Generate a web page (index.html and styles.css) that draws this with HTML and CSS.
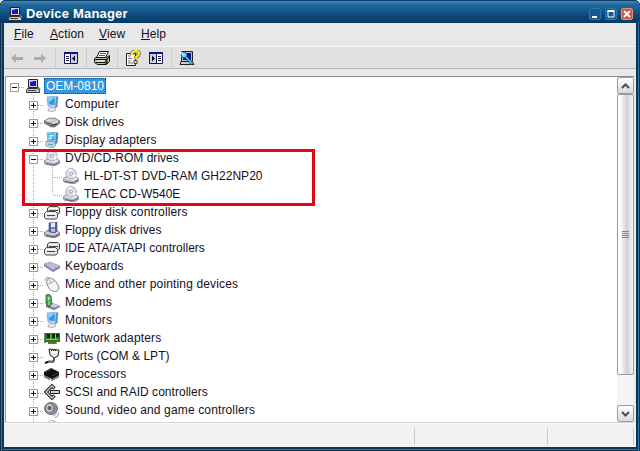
FILE: index.html
```html
<!DOCTYPE html>
<html lang="en">
<head>
    <meta charset="UTF-8">
    <title>Device Manager</title>
    <link rel="stylesheet" href="styles.css">
</head>
<body>
    <svg class="defs" width="0" height="0">
        <symbol id="pc" viewBox="0 0 16 16">
            <path d="M3.500 1.500h9v8h-9z" fill="#d8d8d8" stroke="#222"/>
            <path d="M5 3h6v5H5z" fill="#1212d8"/>
            <path d="M5 3h3v1H5z" fill="#78a8ff"/>
            <path d="M2.500 10.500h10l2 2v2h-13v-2z" fill="#ccc" stroke="#333"/>
            <path d="M3 12.500h8" stroke="#444"/>
            <path d="M13 9l2 3" stroke="#777" stroke-width="1.500"/>
        </symbol>
        <symbol id="monitor" viewBox="0 0 16 16">
            <path d="M3 1l10-1 1 1-1 10-3 1-6-2z" fill="#b9d8ee" stroke="#7899b4" stroke-width=".7"/>
            <path d="M4 2l7-.6-.6 7.6L5 8.500z" fill="#279bea"/>
            <path d="M4 2l7-.6L5 6z" fill="#8bd5ff"/>
            <path d="M12 1l2 0-1 10-2 1z" fill="#5d96c5"/>
            <path d="M7 11l4 1 1 2-3 2-5-1 0-2z" fill="#dfe3e8" stroke="#8a95a2" stroke-width=".6"/>
        </symbol>
        <symbol id="adapter" viewBox="0 0 16 16">
            <path d="M3 1l10-1 1 1-1 10-3 1-6-2z" fill="#b9d8ee" stroke="#5f8aa6" stroke-width=".7"/>
            <path d="M4 2l7-.6-.6 7.6L5 8.500z" fill="#39aee8"/>
            <path d="M5 4l5-.5M5 6.500l3-.5" stroke="#d8f4ff" stroke-width="1.500"/>
            <path d="M12 1l2 0-1 10-2 1z" fill="#4d84b0"/>
            <path d="M2 9l8 1 2 3-3 3-7-2z" fill="#cfd5dc" stroke="#76828e" stroke-width=".7"/>
            <path d="M4 12l5 1" stroke="#3d9d9d"/>
        </symbol>
        <symbol id="disk" viewBox="0 0 16 16">
            <path d="M0 7l5-3h6l5 3v2l-5 4-4 0-7-4z" fill="#777" stroke="#666" stroke-width=".5"/>
            <path d="M1 7l4-2.500h6L15 7l-5 3z" fill="#ccc"/>
            <path d="M3 7l4-1.500M9 10l5-2" stroke="#f6f6f6"/>
            <path d="M8 11.500l5-2" stroke="#333"/>
        </symbol>
        <symbol id="cd" viewBox="0 0 16 16">
            <path d="M0 11l4-3h8l4 3v2l-5 3-10-2z" fill="#b4b4c0" stroke="#777785" stroke-width=".7"/>
            <path d="M1 11l4-2h7l3 2-5 2z" fill="#e8e8f0"/>
            <path d="M2 13.500l8 1.500 5-3" fill="none" stroke="#666674"/>
            <circle cx="8" cy="5.700" r="5.200" fill="#dedfe9" stroke="#9c9caa" stroke-width=".8"/>
            <path d="M8 5.700L5 2a5 5 0 0 1 4-1zM8 5.700l3 4a5 5 0 0 0 2-3z" fill="#fafaff"/>
            <circle cx="8" cy="5.700" r="1.500" fill="#fff" stroke="#8585a0" stroke-width=".8"/>
        </symbol>
        <symbol id="controller" viewBox="0 0 16 16">
            <path d="M3.500 4l2-1.500h8l2 1.500v5l-2 1.500h-9l-1-1z" fill="#d8d8d8" stroke="#444"/>
            <path d="M5 4.500h9" stroke="#fff"/>
            <path d="M5 6.500h9" stroke="#555"/>
            <path d="M.5 9.500l2-2h9l2 2v4l-1.500 1.500h-10L.5 13.500z" fill="#e8e8e8" stroke="#444"/>
            <path d="M3 11.500h8" stroke="#444"/>
            <path d="M2 9.500h10" stroke="#fff"/>
        </symbol>
        <symbol id="floppy" viewBox="0 0 16 16">
            <path d="M0 11l4-3h8l4 3v2l-5 3-10-2z" fill="#aaaab4" stroke="#666672" stroke-width=".7"/>
            <path d="M1 11l4-2h7l3 2-5 2z" fill="#ddd"/>
            <path d="M5 1l8-1v9l-2 2-6-1z" fill="#5268a8" stroke="#36457c" stroke-width=".6"/>
            <path d="M7 1l4-.5V5L7 5.500z" fill="#e8ecfa"/>
            <path d="M7 7l4-.5V10l-4-.5z" fill="#b7c2e2"/>
            <path d="M2 13.500l8 1.500 5-3" fill="none" stroke="#555"/>
        </symbol>
        <symbol id="keyboard" viewBox="0 0 16 16">
            <path d="M0 6l6-2 10 4v2l-7 4L0 8z" fill="#7c7ca4"/>
            <path d="M0 6l6-2 10 4-7 4z" fill="#d5d5ee" stroke="#8585ad" stroke-width=".5"/>
            <path d="M2 6.500l8 4M4 5.700l8 4M6 5l8 3.800" stroke="#8080b2" stroke-dasharray="1 1"/>
        </symbol>
        <symbol id="mouse" viewBox="0 0 16 16">
            <path d="M1 5l1-3 3-1" fill="none" stroke="#888" stroke-width=".8"/>
            <path d="M3 5c0-4 6-4 9 1 3 4 4 7 1 9-3 1-6 0-8-3C3 9 2 7 3 5z" fill="#f5f5f3" stroke="#77776f" stroke-width=".9"/>
            <path d="M3 8c3 0 6-1 7-4M5 3l2 4" fill="none" stroke="#99998f" stroke-width=".8"/>
        </symbol>
        <symbol id="modem" viewBox="0 0 16 16">
            <path d="M2 11l7-2 7 3v1l-6 3-8-3z" fill="#777790"/>
            <path d="M3 11l6-2 6 3-5 2z" fill="#c8c8dc"/>
            <path d="M2 1l3-1 2 2 1 8-3 3-3-3z" fill="#459c4c" stroke="#245e32" stroke-width=".7"/>
            <path d="M3.500 3l2-.5.5 3-2 .5z" fill="#b9efb7"/>
            <path d="M4 8h2M4 10h2" stroke="#c5edc1"/>
        </symbol>
        <symbol id="network" viewBox="0 0 16 16">
            <path d="M0 3h2v10H0z" fill="#777"/>
            <path d="M1 3h15v9H1z" fill="#247a24"/>
            <path d="M3 4h3v4H3zM8 4h3v4H8zM12 4h3v3h-3z" fill="#0a270c"/>
            <path d="M2 9.500h12M7 4v5M11.500 4v6" stroke="#83d64b"/>
            <path d="M4 12h9v2H4z" fill="#a9a938"/>
            <path d="M5 12v2M7 12v2M9 12v2M11 12v2" stroke="#333"/>
        </symbol>
        <symbol id="port" viewBox="0 0 16 16">
            <path d="M5 1l10 1-1 6-4 2-4-3z" fill="#e7e5d5" stroke="#222"/>
            <path d="M7 2.500h6" stroke="#222" stroke-dasharray="1 1"/>
            <path d="M7 4l6 .5" stroke="#fff"/>
            <path d="M10 9v3c-1 4-4 0-6 2l-3 1" fill="none" stroke="#111" stroke-width="2"/>
            <path d="M10 9v3c-1 3-4 0-6 2" fill="none" stroke="#ded79b" stroke-width=".7"/>
        </symbol>
        <symbol id="cpu" viewBox="0 0 16 16">
            <path d="M0 6l7-4 8 4v3l-7 4-8-4z" fill="#111"/>
            <path d="M1 7v5M3 8v5M5 9v5M8 10v5M10 9v5M12 8v5M14 7v5" stroke="#111"/>
            <path d="M2 6l5-3M8 10l6-3" stroke="#555" stroke-width=".7"/>
        </symbol>
        <symbol id="scsi" viewBox="0 0 16 16">
            <path d="M10.500 4.500L8 2 2 8l6 6 2.500-2.500" fill="none" stroke="#222" stroke-width="3.400"/>
            <path d="M10 4L8 2 2 8l6 6 2-2" fill="none" stroke="#ccc" stroke-width="1.400"/>
            <path d="M6.500 6.500h9v3h-9z" fill="#ccc" stroke="#222"/>
        </symbol>
        <symbol id="sound" viewBox="0 0 16 16">
            <ellipse cx="7" cy="6.500" rx="6.500" ry="6" fill="#8d8d91" stroke="#707074"/>
            <ellipse cx="5.500" cy="6" rx="4" ry="4.500" fill="#c6c6cb" stroke="#666" stroke-width=".7"/>
            <circle cx="5.500" cy="6" r="2" fill="#5b5b61"/>
            <path d="M9 14c2 0 3-2 3-4M11 15.500c3 0 3-3 3.500-5" fill="none" stroke="#8c8ce2"/>
        </symbol>
    </svg>

    <div class="window">
        <div class="titlebar">
            <svg class="icon"><use href="#pc"/></svg>
            <h1>Device Manager</h1>
            <div class="controls">
                <button class="ctl" aria-label="Minimize"><svg width="10" height="10"><path d="M2 7h5v2H2z" fill="#fff"/></svg></button>
                <button class="ctl" aria-label="Maximize"><svg width="10" height="10"><path d="M2 2h6v6H2z" fill="none" stroke="#fff"/><path d="M1.500 2h7" stroke="#fff" stroke-width="2"/></svg></button>
                <button class="ctl close" aria-label="Close"><svg width="10" height="10"><path d="M2 2l6 6M8 2l-6 6" stroke="#fff" stroke-width="2"/></svg></button>
            </div>
        </div>

        <div class="menubar">
            <span class="file"><u>F</u>ile</span>
            <span class="action"><u>A</u>ction</span>
            <span class="view"><u>V</u>iew</span>
            <span><u>H</u>elp</span>
        </div>

        <div class="toolbar">
            <svg class="tool back" viewBox="0 0 16 16"><path d="M2 8l5-4v3h7v3H7v3z" fill="#ababab"/></svg>
            <svg class="tool" viewBox="0 0 16 16"><path d="M14 8L9 4v3H2v3h7v3z" fill="#ababab"/></svg>
            <i class="sep"></i>
            <svg class="tool" viewBox="0 0 16 16"><path d="M1.500 2.500h13v11h-13z" fill="#fff" stroke="#11117c"/><path d="M1 2h14v2H1z" fill="#11117c"/><path d="M7.500 4v10" stroke="#11117c"/><path d="M3 6.500h3M3 8.500h3M3 10.500h3" stroke="#222"/><path d="M8 4h6v9H8z" fill="#cecee6"/><path d="M12 5.500v6l-3-3z" fill="#111"/></svg>
            <i class="sep"></i>
            <svg class="tool" viewBox="0 0 16 16"><path d="M5.500 1.500h9l-3 6h-9z" fill="#fff" stroke="#111"/><path d="M6 3.500h6M5 5.500h6" stroke="#555"/><path d="M1.500 7.500h11l3-2v6l-3 3h-9l-3-2v-4z" fill="#bcbcaa" stroke="#111"/><path d="M1 9.500h11l3-2M2 12.500h10" fill="none" stroke="#111"/><path d="M3 11h7" stroke="#fff"/><path d="M12.500 9v5" stroke="#222" stroke-width="2"/></svg>
            <i class="sep"></i>
            <svg class="tool" viewBox="0 0 16 16"><path d="M1.500 3.500h9v12h-9z" fill="#fff" stroke="#222"/><path d="M3 6h3M3 8.500h4M3 11h3M3 13h5" stroke="#777"/><path d="M7 5V3.500c1-3 7-3 7 0 0 3-3.500 2.500-3.500 5.500" fill="none" stroke="#444" stroke-width="3.600"/><path d="M7 5V3.500c1-3 7-3 7 0 0 3-3.500 2.500-3.500 5.500" fill="none" stroke="#ffee24" stroke-width="2.400"/><path d="M9 10.500h3v3H9z" fill="#ffee24" stroke="#444"/></svg>
            <svg class="tool" viewBox="0 0 16 16"><path d="M1.500 2.500h13v11h-13z" fill="#fff" stroke="#11117c"/><path d="M1 2h14v2H1z" fill="#11117c"/><path d="M2 4h6v9H2z" fill="#cecee6"/><path d="M8.500 4v10" stroke="#11117c"/><path d="M10 6.500h3M10 8.500h3M10 10.500h3" stroke="#222"/><path d="M4 5.500v6l3-3z" fill="#111"/></svg>
            <i class="sep"></i>
            <svg class="tool" viewBox="0 0 16 16"><path d="M2.500 1.500h11v10h-11z" fill="#bbb" stroke="#222"/><path d="M4 3h8v7H4z" fill="#111193"/><path d="M2 11.500h11l2 3H1z" fill="#ccc" stroke="#222"/><path d="M6 6l7 8" stroke="#133b59" stroke-width="3"/><path d="M7 7l6 7" stroke="#3ac8ef" stroke-width="1.800"/><circle cx="5" cy="5" r="2.800" fill="#68d6fa" stroke="#1c76a4"/><path d="M2 2l3 3" stroke="#e1e1e1" stroke-width="1.500"/></svg>
        </div>

        <div class="content">
            <div class="tree">
                <div class="row root"><b class="box"></b><i class="dots"></i><svg class="icon"><use href="#pc"/></svg><span class="selected">OEM-0810</span></div>
                <div class="branch">
                    <div class="row"><b class="box plus"></b><i class="dots"></i><svg class="icon"><use href="#monitor"/></svg><span>Computer</span></div>
                    <div class="row"><b class="box plus"></b><i class="dots"></i><svg class="icon"><use href="#disk"/></svg><span class="tight">Disk drives</span></div>
                    <div class="row"><b class="box plus"></b><i class="dots"></i><svg class="icon"><use href="#adapter"/></svg><span>Display adapters</span></div>
                    <div class="group">
                        <div class="row"><b class="box"></b><i class="dots"></i><svg class="icon"><use href="#cd"/></svg><span class="tight">DVD/CD-ROM drives</span></div>
                        <div class="drives">
                            <div class="row"><i class="dots"></i><svg class="icon"><use href="#cd"/></svg><span class="tight">HL-DT-ST DVD-RAM GH22NP20</span></div>
                            <div class="row"><i class="dots"></i><svg class="icon"><use href="#cd"/></svg><span class="tight">TEAC CD-W540E</span></div>
                        </div>
                        <div class="highlight"></div>
                    </div>
                    <div class="row"><b class="box plus"></b><i class="dots"></i><svg class="icon"><use href="#controller"/></svg><span>Floppy disk controllers</span></div>
                    <div class="row"><b class="box plus"></b><i class="dots"></i><svg class="icon"><use href="#floppy"/></svg><span class="tight">Floppy disk drives</span></div>
                    <div class="row"><b class="box plus"></b><i class="dots"></i><svg class="icon"><use href="#controller"/></svg><span class="tight">IDE ATA/ATAPI controllers</span></div>
                    <div class="row"><b class="box plus"></b><i class="dots"></i><svg class="icon"><use href="#keyboard"/></svg><span>Keyboards</span></div>
                    <div class="row"><b class="box plus"></b><i class="dots"></i><svg class="icon"><use href="#mouse"/></svg><span>Mice and other pointing devices</span></div>
                    <div class="row"><b class="box plus"></b><i class="dots"></i><svg class="icon"><use href="#modem"/></svg><span>Modems</span></div>
                    <div class="row"><b class="box plus"></b><i class="dots"></i><svg class="icon"><use href="#monitor"/></svg><span>Monitors</span></div>
                    <div class="row"><b class="box plus"></b><i class="dots"></i><svg class="icon"><use href="#network"/></svg><span>Network adapters</span></div>
                    <div class="row"><b class="box plus"></b><i class="dots"></i><svg class="icon"><use href="#port"/></svg><span class="tight">Ports (COM &amp; LPT)</span></div>
                    <div class="row"><b class="box plus"></b><i class="dots"></i><svg class="icon"><use href="#cpu"/></svg><span>Processors</span></div>
                    <div class="row"><b class="box plus"></b><i class="dots"></i><svg class="icon"><use href="#scsi"/></svg><span class="tight">SCSI and RAID controllers</span></div>
                    <div class="row"><b class="box plus"></b><i class="dots"></i><svg class="icon"><use href="#sound"/></svg><span>Sound, video and game controllers</span></div>
                    <div class="row last"><svg class="icon"><use href="#cd"/></svg></div>
                </div>
            </div>
            <div class="scrollbar">
                <div class="arrow"><svg width="9" height="6"><path d="M1 5l3.500-3.500L8 5" fill="none" stroke="#444b59" stroke-width="2"/></svg></div>
                <div class="thumb"><i></i><i></i><i></i><i></i></div>
                <div class="track"></div>
                <div class="arrow"><svg width="9" height="6"><path d="M1 1l3.500 3.500L8 1" fill="none" stroke="#444b59" stroke-width="2"/></svg></div>
            </div>
        </div>

        <div class="statusbar">
            <div class="pane main"></div>
            <div class="pane middle"></div>
            <div class="pane end"></div>
        </div>
    </div>
</body>
</html>
```
FILE: styles.css
```css
* {
    margin: 0;
    padding: 0;
    box-sizing: border-box;
}

body {
    width: 640px;
    height: 451px;
    overflow: hidden;
    background: #dfe5ea;
    font-family: "Liberation Sans", Arial, sans-serif;
    font-size: 12px;
    color: #15101c;
}

.defs {
    position: absolute;
}

.window {
    height: 451px;
    display: flex;
    flex-direction: column;
    padding: 0 4px 4px;
    border-radius: 6px 6px 0 0;
    background: #0b3558;
    box-shadow: inset 1px 0 #0a2d4c, inset 2px 0 #3578a8, inset -1px 0 #0a2d4c, inset -2px 0 #3578a8, inset 0 -1px #0a2d4c, inset 0 -2px #3578a8;
}

.titlebar {
    height: 23px;
    flex: none;
    margin: 0 -4px;
    padding: 3px 7px 0 7px;
    display: flex;
    align-items: center;
    border-radius: 6px 6px 0 0;
    border-top: 1px solid #0c3d66;
    background: linear-gradient(#4389bb 0, #286c9f 3px, #165a8e 9px, #084576 16px, #063963 100%);
}

.titlebar h1 {
    flex: 1;
    margin-left: 3px;
    font-size: 13px;
    line-height: 18px;
    letter-spacing: 0.2px;
    color: #fff;
}

.icon {
    width: 16px;
    height: 16px;
    flex: none;
}

.controls {
    display: flex;
    gap: 4px;
}

.ctl {
    width: 12px;
    height: 12px;
    display: flex;
    align-items: center;
    justify-content: center;
    border: 1px solid #2b76af;
    border-radius: 2px;
    background: #155991;
}

.ctl.close {
    border-color: #dc9489;
    background: #d35340;
}

.menubar {
    height: 24px;
    flex: none;
    display: flex;
    padding-left: 10px;
    line-height: 22px;
    letter-spacing: 0.1px;
    background: #e8e8e8;
    border-bottom: 1px solid #f9f9f9;
}

.menubar span {
    width: 42px;
}

.menubar .file {
    width: 36px;
}

.menubar .action {
    width: 49px;
}

.toolbar {
    height: 22px;
    flex: none;
    display: flex;
    align-items: center;
    padding-left: 5px;
    background: #e1e1e1;
    border-bottom: 1px solid #b9b9bb;
}

.tool {
    width: 16px;
    height: 16px;
    margin-right: 7px;
}

.sep {
    width: 1px;
    height: 20px;
    margin: 0 7px 0 0;
    background: #cdcdcd;
}

.content {
    height: 354px;
    flex: none;
    display: flex;
    padding: 7px 2px 0 1px;
    background: #e9e9ec;
    border-bottom: 1px solid #d5d5d5;
}

.tree {
    flex: 1;
    overflow: hidden;
    background: #fff;
    border-top: 1px solid #8e8e90;
    border-left: 1px solid #9a9aa0;
}

.row {
    height: 18px;
    display: flex;
    align-items: center;
    white-space: nowrap;
}

.row span {
    margin-left: 5px;
    line-height: 18px;
    letter-spacing: 0.14px;
}

.row .tight {
    letter-spacing: 0.03px;
}

.row .selected {
    margin-left: 3px;
    padding: 0 2px;
    line-height: 16px;
    letter-spacing: 0;
    color: #fff;
    background: #3497df;
    outline: 1px dotted #24405c;
    outline-offset: -1px;
}

.root {
    padding-left: 4px;
}

.box {
    width: 9px;
    height: 9px;
    flex: none;
    border: 1px solid #9c9c9c;
    background: linear-gradient(#111, #111) 1px 3px / 5px 1px no-repeat #fff;
    margin-top: 2px;
    z-index: 1;
}

.box.plus {
    background: linear-gradient(#111, #111) 1px 3px / 5px 1px no-repeat, linear-gradient(#111, #111) 3px 1px / 1px 5px no-repeat, #fff;
}

.dots {
    width: 6px;
    height: 1px;
    margin-top: 2px;
    background: repeating-linear-gradient(90deg, #aaa 0 1px, transparent 1px 2px);
}

.branch {
    padding-left: 23px;
    background: repeating-linear-gradient(#aaa 0 1px, transparent 1px 2px) 27px 0 / 1px 100% no-repeat;
}

.group {
    position: relative;
}

.drives {
    padding-left: 24px;
    background: repeating-linear-gradient(#aaa 0 1px, transparent 1px 2px) 23px 0 / 1px 28px no-repeat;
}

.drives .dots {
    width: 10px;
}

/* red frame over the optical drives */
.highlight {
    position: absolute;
    left: -7px;
    top: 0;
    width: 293px;
    height: 57px;
    border: 3px solid #e30613;
}

.last {
    padding-left: 15px;
}

.scrollbar {
    width: 17px;
    display: flex;
    flex-direction: column;
    border-top: 1px solid #8e8e90;
    background: #f4f4f4;
}

.arrow {
    height: 17px;
    flex: none;
    display: flex;
    align-items: center;
    justify-content: center;
    border: 1px solid #9b9b9f;
    border-radius: 2px;
    background: linear-gradient(#fff, #d9d9dc);
}

.thumb {
    height: 281px;
    display: flex;
    flex-direction: column;
    align-items: center;
    justify-content: center;
    gap: 1px;
    border: 1px solid #9b9b9f;
    border-radius: 2px;
    background: linear-gradient(90deg, #fff 10%, #d2d2d5 60%, #f4f4f4);
}

.thumb i {
    width: 7px;
    height: 1px;
    background: #858589;
}

.track {
    flex: 1;
}

.statusbar {
    flex: 1;
    display: flex;
    padding: 4px 2px 2px 0;
    background: #f2f2f2;
    border-top: 1px solid #fafafa;
}

.pane {
    border-right: 1px solid #c9c9c9;
}

.main {
    width: 411px;
}

.middle {
    width: 133px;
}

.end {
    flex: 1;
}
```
